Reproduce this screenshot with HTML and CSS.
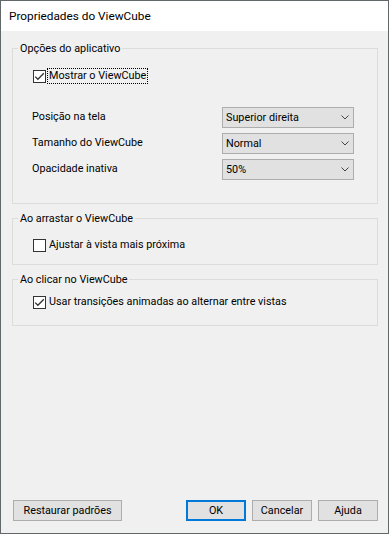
FILE: index.html
```html
<!DOCTYPE html>
<html lang="pt">
<head>
<meta charset="utf-8">
<title>Propriedades do ViewCube</title>
<link rel="stylesheet" href="styles.css">
</head>
<body>
<div class="window">
  <div class="titlebar">Propriedades do ViewCube</div>
  <div class="content">
    <div class="group">
      <div class="legend">Opções do aplicativo</div>
      <div class="check check-app">
        <span class="box"><svg width="11" height="11" viewBox="0 0 11 11"><polyline points="1.2,5.6 3.9,8.3 9.8,2.2" fill="none" stroke="#333" stroke-width="1.3"/></svg></span>
        <span class="lbl focused">Mostrar o ViewCube</span>
      </div>
      <div class="fields">
        <span class="field-label">Posição na tela</span>
        <div class="combo"><span>Superior direita</span><svg class="chev" width="8" height="5" viewBox="0 0 8 5"><polyline points="0.5,0.5 4,4 7.5,0.5" fill="none" stroke="#444" stroke-width="1"/></svg></div>
        <span class="field-label">Tamanho do ViewCube</span>
        <div class="combo"><span>Normal</span><svg class="chev" width="8" height="5" viewBox="0 0 8 5"><polyline points="0.5,0.5 4,4 7.5,0.5" fill="none" stroke="#444" stroke-width="1"/></svg></div>
        <span class="field-label">Opacidade inativa</span>
        <div class="combo"><span>50%</span><svg class="chev" width="8" height="5" viewBox="0 0 8 5"><polyline points="0.5,0.5 4,4 7.5,0.5" fill="none" stroke="#444" stroke-width="1"/></svg></div>
      </div>
    </div>
    <div class="group">
      <div class="legend">Ao arrastar o ViewCube</div>
      <div class="check check-drag">
        <span class="box"></span>
        <span class="lbl">Ajustar à vista mais próxima</span>
      </div>
    </div>
    <div class="group">
      <div class="legend">Ao clicar no ViewCube</div>
      <div class="check check-click">
        <span class="box"><svg width="11" height="11" viewBox="0 0 11 11"><polyline points="1.2,5.6 3.9,8.3 9.8,2.2" fill="none" stroke="#333" stroke-width="1.3"/></svg></span>
        <span class="lbl">Usar transições animadas ao alternar entre vistas</span>
      </div>
    </div>
    <div class="buttons">
      <button class="btn btn-wide">Restaurar padrões</button>
      <span class="spacer"></span>
      <button class="btn btn-default">OK</button>
      <button class="btn">Cancelar</button>
      <button class="btn">Ajuda</button>
    </div>
  </div>
</div>
</body>
</html>
```

FILE: styles.css
```css
html, body {
  margin: 0;
  padding: 0;
  background: #f0f0f0;
}

.window {
  width: 389px;
  height: 534px;
  box-sizing: border-box;
  border: 1px solid #62676a;
  display: flex;
  flex-direction: column;
  background: #f0f0f0;
  font-family: Roboto, "Segoe UI", sans-serif;
  font-size: 10.8px;
  color: #000;
}

.titlebar {
  height: 30px;
  background: #fff;
  padding-left: 8px;
  font-size: 11.8px;
  line-height: 30px;
  color: #000;
}

.content {
  flex: 1;
  display: flex;
  flex-direction: column;
  padding: 17px 10px 12px 11px;
}

.group {
  border: 1px solid #dcdcdc;
  display: flex;
  flex-direction: column;
}

.group + .group {
  margin-top: 14px;
}

.legend {
  align-self: flex-start;
  margin: -8px 0 0 5px;
  padding: 0 2px;
  line-height: 15px;
  background: #f0f0f0;
}

.check {
  display: flex;
  align-items: center;
  height: 16px;
  margin-left: 20px;
}

.check-app {
  margin-top: 12px;
}

.check-drag {
  margin-top: 11px;
  margin-bottom: 11px;
}

.check-click {
  margin-top: 7px;
  margin-bottom: 15px;
}

.box {
  width: 13px;
  height: 13px;
  box-sizing: border-box;
  border: 1px solid #333;
  background: #fff;
  display: flex;
  align-items: center;
  justify-content: center;
  flex: none;
}

.box svg {
  display: block;
}

.lbl {
  margin-left: 1px;
  padding: 0 1px;
  line-height: 14px;
  border: 1px dotted transparent;
  white-space: nowrap;
}

.lbl.focused {
  border-color: #000;
}

.fields {
  display: grid;
  grid-template-columns: 190px 132px;
  row-gap: 5px;
  align-items: center;
  margin: 23px 0 23px 19px;
}

.field-label {
  line-height: 14px;
  margin-top: -2px;
}

.combo {
  height: 21px;
  box-sizing: border-box;
  border: 1px solid #adadad;
  background: #e1e1e1;
  display: flex;
  align-items: center;
  justify-content: space-between;
  padding: 0 4px 0 3px;
}

.chev {
  display: block;
}

.buttons {
  margin-top: auto;
  display: flex;
  gap: 6px;
  padding: 0 0 0 1px;
}

.spacer {
  flex: 1;
}

.btn {
  width: 60px;
  height: 21px;
  box-sizing: border-box;
  border: 1px solid #adadad;
  background: #e1e1e1;
  font-family: Roboto, "Segoe UI", sans-serif;
  font-size: 10.8px;
  color: #000;
  padding: 0;
  margin: 0;
}

.btn-wide {
  width: 109px;
}

.btn-default {
  border: 2px solid #0078d7;
}
```
